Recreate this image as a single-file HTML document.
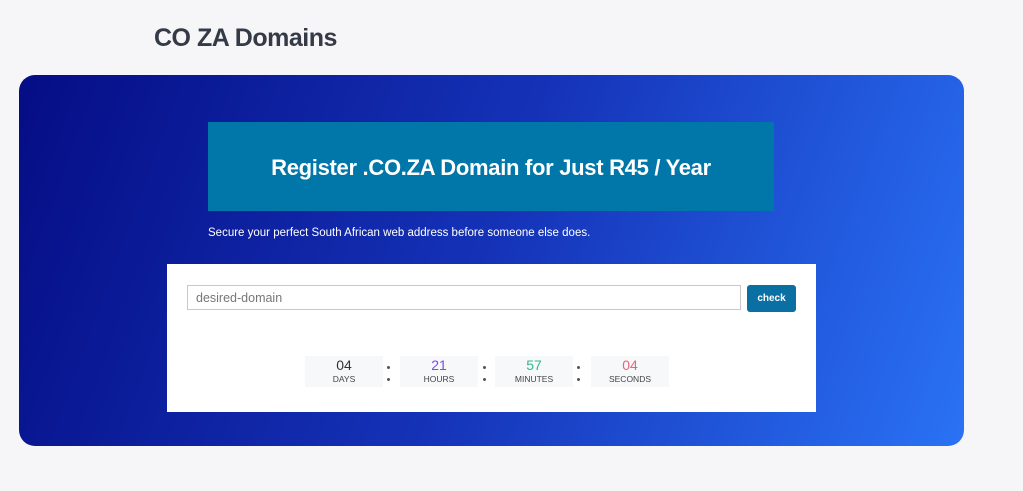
<!DOCTYPE html>
<html><head><style>
body{margin:0;width:1023px;height:491px;background:#f6f6f8;font-family:"Liberation Sans",sans-serif;position:relative;overflow:hidden}
h1{position:absolute;left:154px;top:24px;margin:0;font-size:25px;font-weight:bold;color:#343a46;letter-spacing:-0.5px}
.panel{position:absolute;left:19px;top:75px;width:945px;height:371px;border-radius:16px;background:linear-gradient(110deg,#050d85 0%,#1533b8 50%,#2a72f5 100%)}
.teal{position:absolute;left:208px;top:122px;width:566px;height:89px;background:#0077a8;color:#fff;font-size:22px;font-weight:bold;text-align:center;line-height:92px;letter-spacing:-0.3px}
.sub{position:absolute;left:208px;top:227px;color:#fff;font-size:11.5px}
.card{position:absolute;left:167px;top:264px;width:649px;height:148px;background:#fff}
.inp{position:absolute;left:20px;top:21px;height:25px;border:1px solid #c8c8c8;font-size:12.5px;color:#777;line-height:25px;padding-left:8px;box-sizing:border-box;width:554px}
.btn{position:absolute;left:580px;top:21px;width:49px;height:27px;background:#0a6fa3;border-radius:3px;color:#fff;font-size:10px;font-weight:bold;text-align:center;line-height:27px}
.cd{position:absolute;top:92px;width:78px;height:31px;background:#f7f8fa;text-align:center}
.cd b{display:block;font-weight:normal;font-size:14px;line-height:16px;margin-top:1px}
.cd span{display:block;font-size:8.5px;color:#444;line-height:12px}
.dot{position:absolute;width:3px;height:3px;border-radius:50%;background:#555}
</style></head><body>
<h1>CO ZA Domains</h1>
<div class="panel"></div>
<div class="teal">Register .CO.ZA Domain for Just R45 / Year</div>
<div class="sub">Secure your perfect South African web address before someone else does.</div>
<div class="card">
<div class="inp">desired-domain</div>
<div class="btn">check</div>
<div class="cd" style="left:138px"><b style="color:#333">04</b><span>DAYS</span></div>
<div class="cd" style="left:233px"><b style="color:#7b4ddb">21</b><span>HOURS</span></div>
<div class="cd" style="left:328px"><b style="color:#2fb98a">57</b><span>MINUTES</span></div>
<div class="cd" style="left:424px"><b style="color:#e8627a">04</b><span>SECONDS</span></div>
<div class="dot" style="left:220px;top:102px"></div><div class="dot" style="left:220px;top:114px"></div>
<div class="dot" style="left:316px;top:102px"></div><div class="dot" style="left:316px;top:114px"></div>
<div class="dot" style="left:410px;top:102px"></div><div class="dot" style="left:410px;top:114px"></div>
</div>
</body></html>
